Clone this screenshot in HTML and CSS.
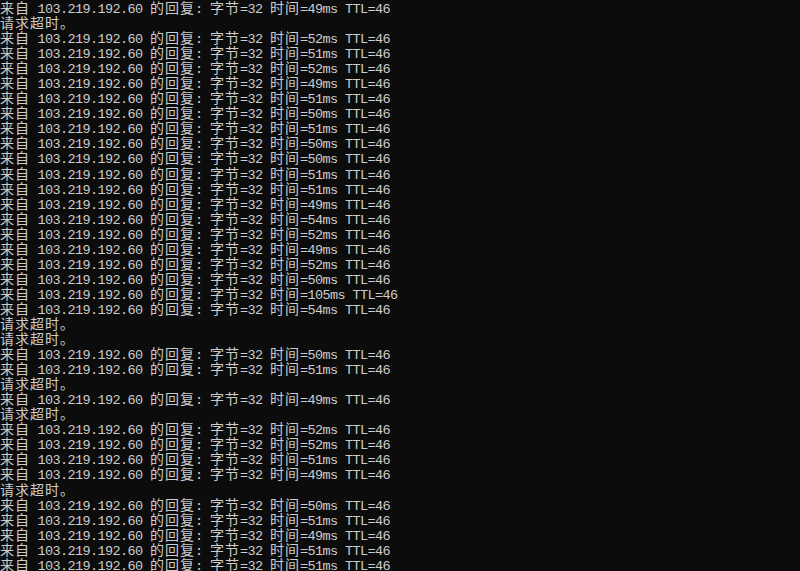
FILE: index.html
```html
<!DOCTYPE html>
<html lang="zh-CN">
<head>
<meta charset="utf-8">
<title>ping</title>
<link rel="stylesheet" href="styles.css">
</head>
<body>
<div class="console">
<div class="l"><span class="c">来自</span> 103.219.192.60 <span class="c">的回复</span>: <span class="c">字节</span>=32 <span class="c">时间</span>=49ms TTL=46</div>
<div class="l"><span class="c">请求超时。</span></div>
<div class="l"><span class="c">来自</span> 103.219.192.60 <span class="c">的回复</span>: <span class="c">字节</span>=32 <span class="c">时间</span>=52ms TTL=46</div>
<div class="l"><span class="c">来自</span> 103.219.192.60 <span class="c">的回复</span>: <span class="c">字节</span>=32 <span class="c">时间</span>=51ms TTL=46</div>
<div class="l"><span class="c">来自</span> 103.219.192.60 <span class="c">的回复</span>: <span class="c">字节</span>=32 <span class="c">时间</span>=52ms TTL=46</div>
<div class="l"><span class="c">来自</span> 103.219.192.60 <span class="c">的回复</span>: <span class="c">字节</span>=32 <span class="c">时间</span>=49ms TTL=46</div>
<div class="l"><span class="c">来自</span> 103.219.192.60 <span class="c">的回复</span>: <span class="c">字节</span>=32 <span class="c">时间</span>=51ms TTL=46</div>
<div class="l"><span class="c">来自</span> 103.219.192.60 <span class="c">的回复</span>: <span class="c">字节</span>=32 <span class="c">时间</span>=50ms TTL=46</div>
<div class="l"><span class="c">来自</span> 103.219.192.60 <span class="c">的回复</span>: <span class="c">字节</span>=32 <span class="c">时间</span>=51ms TTL=46</div>
<div class="l"><span class="c">来自</span> 103.219.192.60 <span class="c">的回复</span>: <span class="c">字节</span>=32 <span class="c">时间</span>=50ms TTL=46</div>
<div class="l"><span class="c">来自</span> 103.219.192.60 <span class="c">的回复</span>: <span class="c">字节</span>=32 <span class="c">时间</span>=50ms TTL=46</div>
<div class="l"><span class="c">来自</span> 103.219.192.60 <span class="c">的回复</span>: <span class="c">字节</span>=32 <span class="c">时间</span>=51ms TTL=46</div>
<div class="l"><span class="c">来自</span> 103.219.192.60 <span class="c">的回复</span>: <span class="c">字节</span>=32 <span class="c">时间</span>=51ms TTL=46</div>
<div class="l"><span class="c">来自</span> 103.219.192.60 <span class="c">的回复</span>: <span class="c">字节</span>=32 <span class="c">时间</span>=49ms TTL=46</div>
<div class="l"><span class="c">来自</span> 103.219.192.60 <span class="c">的回复</span>: <span class="c">字节</span>=32 <span class="c">时间</span>=54ms TTL=46</div>
<div class="l"><span class="c">来自</span> 103.219.192.60 <span class="c">的回复</span>: <span class="c">字节</span>=32 <span class="c">时间</span>=52ms TTL=46</div>
<div class="l"><span class="c">来自</span> 103.219.192.60 <span class="c">的回复</span>: <span class="c">字节</span>=32 <span class="c">时间</span>=49ms TTL=46</div>
<div class="l"><span class="c">来自</span> 103.219.192.60 <span class="c">的回复</span>: <span class="c">字节</span>=32 <span class="c">时间</span>=52ms TTL=46</div>
<div class="l"><span class="c">来自</span> 103.219.192.60 <span class="c">的回复</span>: <span class="c">字节</span>=32 <span class="c">时间</span>=50ms TTL=46</div>
<div class="l"><span class="c">来自</span> 103.219.192.60 <span class="c">的回复</span>: <span class="c">字节</span>=32 <span class="c">时间</span>=105ms TTL=46</div>
<div class="l"><span class="c">来自</span> 103.219.192.60 <span class="c">的回复</span>: <span class="c">字节</span>=32 <span class="c">时间</span>=54ms TTL=46</div>
<div class="l"><span class="c">请求超时。</span></div>
<div class="l"><span class="c">请求超时。</span></div>
<div class="l"><span class="c">来自</span> 103.219.192.60 <span class="c">的回复</span>: <span class="c">字节</span>=32 <span class="c">时间</span>=50ms TTL=46</div>
<div class="l"><span class="c">来自</span> 103.219.192.60 <span class="c">的回复</span>: <span class="c">字节</span>=32 <span class="c">时间</span>=51ms TTL=46</div>
<div class="l"><span class="c">请求超时。</span></div>
<div class="l"><span class="c">来自</span> 103.219.192.60 <span class="c">的回复</span>: <span class="c">字节</span>=32 <span class="c">时间</span>=49ms TTL=46</div>
<div class="l"><span class="c">请求超时。</span></div>
<div class="l"><span class="c">来自</span> 103.219.192.60 <span class="c">的回复</span>: <span class="c">字节</span>=32 <span class="c">时间</span>=52ms TTL=46</div>
<div class="l"><span class="c">来自</span> 103.219.192.60 <span class="c">的回复</span>: <span class="c">字节</span>=32 <span class="c">时间</span>=52ms TTL=46</div>
<div class="l"><span class="c">来自</span> 103.219.192.60 <span class="c">的回复</span>: <span class="c">字节</span>=32 <span class="c">时间</span>=51ms TTL=46</div>
<div class="l"><span class="c">来自</span> 103.219.192.60 <span class="c">的回复</span>: <span class="c">字节</span>=32 <span class="c">时间</span>=49ms TTL=46</div>
<div class="l"><span class="c">请求超时。</span></div>
<div class="l"><span class="c">来自</span> 103.219.192.60 <span class="c">的回复</span>: <span class="c">字节</span>=32 <span class="c">时间</span>=50ms TTL=46</div>
<div class="l"><span class="c">来自</span> 103.219.192.60 <span class="c">的回复</span>: <span class="c">字节</span>=32 <span class="c">时间</span>=51ms TTL=46</div>
<div class="l"><span class="c">来自</span> 103.219.192.60 <span class="c">的回复</span>: <span class="c">字节</span>=32 <span class="c">时间</span>=49ms TTL=46</div>
<div class="l"><span class="c">来自</span> 103.219.192.60 <span class="c">的回复</span>: <span class="c">字节</span>=32 <span class="c">时间</span>=51ms TTL=46</div>
<div class="l"><span class="c">来自</span> 103.219.192.60 <span class="c">的回复</span>: <span class="c">字节</span>=32 <span class="c">时间</span>=51ms TTL=46</div>
</div>
</body>
</html>
```

FILE: styles.css
```css
html, body {
  margin: 0;
  padding: 0;
  background: #0c0c0c;
  height: 100%;
  overflow: hidden;
}

.console {
  display: flex;
  flex-direction: column;
  color: #cccccc;
  font-family: "Liberation Mono", monospace;
  font-size: 13.5px;
  letter-spacing: -0.6px;
}

.l {
  height: 15.06px;
  line-height: 15px;
  white-space: pre;
  flex: none;
}

.c {
  font-family: "Noto Sans CJK SC", sans-serif;
  font-size: 14px;
  letter-spacing: 1px;
  line-height: 15px;
}
```
